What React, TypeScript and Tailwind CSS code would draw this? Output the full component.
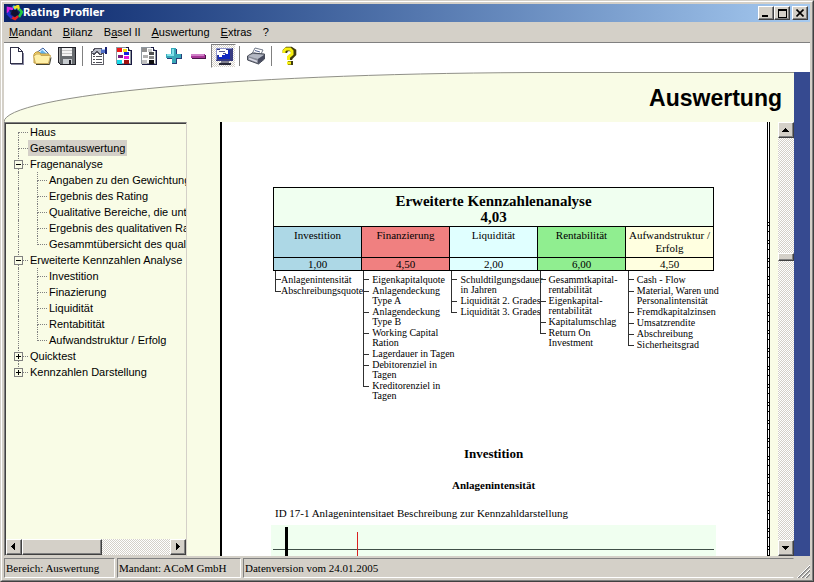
import React from "react";

const raised =
  "border border-t-white border-l-white border-r-[#404040] border-b-[#404040] bg-[#d4d0c8] shadow-[inset_-1px_-1px_#808080]";
const track =
  "bg-[repeating-conic-gradient(#d4d0c8_0_25%,#ffffff_0_50%)] bg-size-[2px_2px]";

function Logo() {
  return (
    <svg width="17" height="16" viewBox="0 0 17 16" fill="none" strokeWidth="2.6">
      <path d="M7 1 10 4" stroke="#30c8f0" />
      <path d="M2 8V3l5 1" stroke="#e020e0" />
      <path d="m8 3 4-2 1 4" stroke="#f0e020" />
      <path d="m13 4 3 3-3 5" stroke="#20c840" />
      <path d="m12 11-3 3-4-2" stroke="#e82020" />
      <path d="m6 13-4-4 2-2" stroke="#2030d0" />
      <path d="M6 5h5l2 4-4 3-4-3z" fill="#101030" />
    </svg>
  );
}

function NewIcon() {
  return (
    <svg width="18" height="20" viewBox="0 0 18 20" shapeRendering="crispEdges">
      <path d="M2.500 1.500h8l4 4v12h-12z" fill="#fff" stroke="#303048" />
      <path d="M10.500 1.500v4h4" fill="none" stroke="#303048" />
      <path d="M3 18.500h12.500V7" fill="none" stroke="#8888a0" />
    </svg>
  );
}

function OpenIcon() {
  return (
    <svg width="20" height="20" viewBox="0 0 20 20">
      <path d="m4 7 7-5 5 5 1 6H4z" fill="#d8f0ff" stroke="#4060a0" />
      <path d="m10 4 5 4H7z" fill="#60b0e8" />
      <path d="M2 17V8l2-2h3l2 2h8v9z" fill="#f8d870" stroke="#c09838" />
      <path d="m1.500 9.500 2 8h13l2-8H9L8 8H4l-1 1.500z" fill="#fff0a8" stroke="#c8a858" />
      <path d="M4 18.500h13.500l1.500-7" fill="none" stroke="#404030" />
    </svg>
  );
}

function SaveIcon() {
  return (
    <svg width="20" height="20" viewBox="0 0 20 20" shapeRendering="crispEdges">
      <path d="M1.500 1.500h17v17h-15l-2-2z" fill="#686c70" stroke="#202028" />
      <path d="M5 2h10v8H5z" fill="#f4f4f4" />
      <path d="M5 4h10v1H5zM5 7h10v1H5z" fill="#c8c8c8" />
      <path d="M6 13h9v5H6z" fill="#c8ccd0" />
      <path d="M12 14h2v4h-2z" fill="#202028" />
      <path d="M2 2h1v14H2z" fill="#a8a8a8" />
    </svg>
  );
}

function PropertiesIcon() {
  return (
    <svg width="20" height="20" viewBox="0 0 20 20" shapeRendering="crispEdges">
      <path d="M2.500 5.500h12v13h-12z" fill="#fff" stroke="#606068" />
      <path d="M4 10h2v1H4zm3 0h6v1H7zm-3 3h2v1H4zm3 0h6v1H7zm-3 3h2v1H4zm3 0h6v1H7z" fill="#505058" />
      <path d="M2.500 6.500 6 2.500h6l2 1v4l-3 1-3-3-3 3z" fill="#b8bcc8" stroke="#50505c" />
      <path d="M12 3h5v4h-5z" fill="#5070c8" />
      <path d="M13 3h3v1h-3z" fill="#b0c8f8" />
      <path d="M16 1h2v7h-2z" fill="#182070" />
    </svg>
  );
}

function ReportIcon({ colors }: { colors: string[] }) {
  return (
    <svg width="18" height="20" viewBox="0 0 18 20" shapeRendering="crispEdges">
      <path d="M1.500 1.500h11l3 3v13h-14z" fill="#fff" stroke="#9098a0" />
      <path d="M11 1.500h2v3h3v14H2" fill="none" stroke="#181840" />
      <path d="M2 2h5v4H2z" fill={colors[0]} />
      <path d="M9 6h5v3H9z" fill={colors[1]} />
      <path d="M8 3h4v3H8z" fill={colors[2]} />
      <path d="M3 9h5v3H3z" fill={colors[3]} />
      <path d="M9 10h5v3H9z" fill={colors[4]} />
      <path d="M2 14h5v4H2z" fill={colors[5]} />
      <path d="M9 14h5v4H9z" fill={colors[6]} />
    </svg>
  );
}

function PlusIcon() {
  return (
    <svg width="18" height="18" viewBox="0 0 18 18" shapeRendering="crispEdges">
      <path d="M7 2h5v5h5v5h-5v5H7v-5H2V7h5z" fill="#283c78" />
      <path d="M6 1h5v6h5v4h-5v5H7v-5H1V7h5z" fill="#38a8b8" />
      <path d="M7 2h2v7H2V7h5z" fill="#80e0e8" />
    </svg>
  );
}

function MinusIcon() {
  return (
    <svg width="18" height="18" viewBox="0 0 18 18" shapeRendering="crispEdges">
      <path d="M2 8h14v4H2z" fill="#481848" />
      <path d="M1 7h14v4H1z" fill="#a83898" />
      <path d="M1 7h13v2H1z" fill="#d080c8" />
    </svg>
  );
}

function MonitorIcon() {
  return (
    <svg width="20" height="20" viewBox="0 0 20 20" shapeRendering="crispEdges">
      <path d="M2 2h17v13H2z" fill="#383c80" />
      <path d="M2 2h16v1H3v11H2z" fill="#9098d0" />
      <path d="M4 4h12v9H4z" fill="#1028c0" />
      <path d="M3 4h3V3h6v1h2v4h-3v1H8v2H5V9H3z" fill="#fff" />
      <path d="M5 5h6v1H5zM9 7h3v1H9z" fill="#505890" />
      <path d="M7 15h8v2H7z" fill="#808090" />
      <path d="M5 17h12v2H5z" fill="#282838" />
    </svg>
  );
}

function PrinterIcon() {
  return (
    <svg width="20" height="20" viewBox="0 0 20 20">
      <path d="m6 8 3-6 8 2-3 6z" fill="#fff" stroke="#707888" />
      <path d="m9 4.500 5 1.500m-6 1 5 1" stroke="#506090" />
      <path d="m1.500 10 5-3 12 1v5l-6 5-11-4z" fill="#888c98" stroke="#484c58" />
      <path d="m2 10 5-2 11 1-6 4z" fill="#b4b8c4" />
      <path d="m12 13 6-4v4l-6 5z" fill="#484c60" />
      <path d="m3 12.500 8 3" stroke="#d8d8e4" strokeWidth="1.500" />
    </svg>
  );
}

function HelpIcon() {
  return (
    <svg width="18" height="20" viewBox="0 0 18 20" fill="none">
      <path d="M6 7V5l2-2h4l3 2v3l-4 4v2" stroke="#403c10" strokeWidth="4.600" />
      <path d="M9 15h5v4H9z" fill="#403c10" />
      <path d="M5 7V5l2-2h4l2 2v3l-3.500 3v3" stroke="#f8f010" strokeWidth="3" />
      <path d="M8 15.500h4v3H8z" fill="#f8f010" />
    </svg>
  );
}

type Tool = { label: string; icon: React.ReactNode; active?: boolean } | null;

const tools: Tool[] = [
  { label: "Neu", icon: <NewIcon /> },
  { label: "Öffnen", icon: <OpenIcon /> },
  { label: "Speichern", icon: <SaveIcon /> },
  null,
  { label: "Eigenschaften", icon: <PropertiesIcon /> },
  {
    label: "Farbiger Bericht",
    icon: <ReportIcon colors={["#f01818", "#1820e0", "#f8e018", "#781880", "#e818e0", "#18d8e8", "#a01010"]} />,
  },
  {
    label: "Grauer Bericht",
    icon: <ReportIcon colors={["#909090", "#505050", "#c8c8c8", "#b0b0b0", "#888888", "#c0c0c0", "#101010"]} />,
  },
  { label: "Hinzufügen", icon: <PlusIcon /> },
  { label: "Entfernen", icon: <MinusIcon /> },
  { label: "Auswertung", icon: <MonitorIcon />, active: true },
  null,
  { label: "Drucken", icon: <PrinterIcon /> },
  null,
  { label: "Hilfe", icon: <HelpIcon /> },
];

const menus = [
  ["", "M", "andant"],
  ["", "B", "ilanz"],
  ["B", "a", "sel II"],
  ["", "A", "uswertung"],
  ["", "E", "xtras"],
  ["?", "", ""],
];

type Node = { label: string; selected?: boolean; toggle?: "+" | "-"; children?: string[] };

const tree: Node[] = [
  { label: "Haus" },
  { label: "Gesamtauswertung", selected: true },
  {
    label: "Fragenanalyse",
    toggle: "-",
    children: [
      "Angaben zu den Gewichtung",
      "Ergebnis des Rating",
      "Qualitative Bereiche, die unte",
      "Ergebnis des qualitativen Rat",
      "Gesammtübersicht des qualit",
    ],
  },
  {
    label: "Erweiterte Kennzahlen Analyse",
    toggle: "-",
    children: ["Investition", "Finazierung", "Liquidität", "Rentabitität", "Aufwandstruktur / Erfolg"],
  },
  { label: "Quicktest", toggle: "+" },
  { label: "Kennzahlen Darstellung", toggle: "+" },
];

function Branch({ first, last }: { first?: boolean; last?: boolean }) {
  return (
    <span className="flex h-4 w-[10px] shrink-0 flex-col">
      <span className={`h-[9px] border-b border-dotted border-[#808080] ${first ? "" : "border-l"}`} />
      <span className={`flex-1 border-dotted border-[#808080] ${last ? "" : "border-l"}`} />
    </span>
  );
}

function Tree() {
  return (
    <ul className="flex-1 overflow-hidden text-[11px] leading-4 whitespace-nowrap">
      {tree.map((node, i) => (
        <li key={node.label}>
          <div className="relative flex h-4 pl-3">
            <Branch first={i === 0} last={i === tree.length - 1} />
            {node.toggle && (
              <button
                aria-label={node.label}
                className="absolute top-1 left-2 flex size-[9px] items-center justify-center border border-[#808080] bg-[#f9fce6]"
              >
                <svg width="5" height="5" viewBox="0 0 5 5" shapeRendering="crispEdges">
                  <path d={node.toggle === "+" ? "M0 2h5v1H0zM2 0h1v5H2z" : "M0 2h5v1H0z"} />
                </svg>
              </button>
            )}
            <button className={node.selected ? "bg-[#d4d0c8] px-[2px]" : "pl-[2px]"}>{node.label}</button>
          </div>
          {node.children && (
            <ul>
              {node.children.map((child, j) => (
                <li key={child} className="flex h-4 pl-3">
                  <span className="w-[19px] shrink-0 border-l border-dotted border-[#808080]" />
                  <Branch last={j === node.children!.length - 1} />
                  <button className="pl-[2px]">{child}</button>
                </li>
              ))}
            </ul>
          )}
        </li>
      ))}
    </ul>
  );
}

function Arrow({ d }: { d: string }) {
  return (
    <svg width="8" height="8" viewBox="0 0 8 8" shapeRendering="crispEdges">
      <path d={d} />
    </svg>
  );
}

const groups = [
  {
    name: "Investition",
    value: "1,00",
    color: "bg-[#add8e6]",
    items: [["Anlagenintensität"], ["Abschreibungsquote"]],
  },
  {
    name: "Finanzierung",
    value: "4,50",
    color: "bg-[#f08080]",
    items: [
      ["Eigenkapitalquote"],
      ["Anlagendeckung", "Type A"],
      ["Anlagendeckung", "Type B"],
      ["Working Capital", "Ration"],
      ["Lagerdauer in Tagen"],
      ["Debitorenziel in", "Tagen"],
      ["Kreditorenziel in", "Tagen"],
    ],
  },
  {
    name: "Liquidität",
    value: "2,00",
    color: "bg-[#e0ffff]",
    items: [["Schuldtilgungsdauer", "in Jahren"], ["Liquidität 2. Grades"], ["Liquidität 3. Grades"]],
  },
  {
    name: "Rentabilität",
    value: "6,00",
    color: "bg-[#90ee90]",
    items: [
      ["Gesammtkapital-", "rentabilität"],
      ["Eigenkapital-", "rentabilität"],
      ["Kapitalumschlag"],
      ["Return On", "Investment"],
    ],
  },
  {
    name: "Aufwandstruktur / Erfolg",
    value: "4,50",
    color: "bg-[#ffffe0]",
    items: [
      ["Cash - Flow"],
      ["Material, Waren und", "Personalintensität"],
      ["Fremdkapitalzinsen"],
      ["Umsatzrendite"],
      ["Abschreibung"],
      ["Sicherheitsgrad"],
    ],
  },
];

function Report() {
  return (
    <div className="mx-auto w-[441px] pt-[65px] font-['Liberation_Serif','Times_New_Roman',serif]">
      <table className="w-full table-fixed border-collapse text-center text-[11px] leading-[13px]">
        <thead>
          <tr>
            <th colSpan={5} className="h-[39px] border border-black bg-[#f0fff0] px-0 pt-1 pb-0 text-[15px] leading-4 font-bold">
              Erweiterte Kennzahlenanalyse
              <br />
              4,03
            </th>
          </tr>
          <tr>
            {groups.map((g) => (
              <th key={g.name} className={`h-[31px] border border-black px-0 pt-[2px] align-top font-normal ${g.color}`}>
                {g.name}
              </th>
            ))}
          </tr>
        </thead>
        <tbody>
          <tr>
            {groups.map((g) => (
              <td key={g.name} className={`h-[13px] border border-black leading-3 ${g.color}`}>
                {g.value}
              </td>
            ))}
          </tr>
        </tbody>
      </table>
      <div className="grid h-[168px] grid-cols-5 text-[10px] leading-[10px] whitespace-nowrap">
        {groups.map((g, i) => (
          <ul key={g.name} className="pl-[2px]">
            {g.items.map((lines, j) => (
              <li key={j} className="flex">
                <span className="flex w-[6px] shrink-0 flex-col">
                  <span className={`border-b border-l border-[#303030] ${j === 0 ? "h-[9px]" : "h-[6px]"}`} />
                  <span className={`flex-1 border-[#303030] ${j === g.items.length - 1 ? "" : "border-l"}`} />
                </span>
                <span className={`pb-px ${i === 0 ? "" : "pl-[3px]"} ${j === 0 ? "pt-1" : ""}`}>
                  {lines.map((line) => (
                    <span key={line} className="block">
                      {line}
                    </span>
                  ))}
                </span>
              </li>
            ))}
          </ul>
        ))}
      </div>
      <h2 className="pt-[7px] text-center text-[13px] leading-4 font-bold">Investition</h2>
      <h3 className="pt-[15px] text-center text-[11px] leading-4 font-bold">Anlagenintensität</h3>
      <p className="pt-3 pl-[2px] text-[11px] leading-4">ID 17-1 Anlagenintensitaet Beschreibung zur Kennzahldarstellung</p>
      <svg className="-mx-[2px] mt-1 w-[445px] bg-[#f0fff0]" height="60" viewBox="0 0 445 60" shapeRendering="crispEdges">
        <path d="M2 24h441v1H2z" fill="#405048" />
        <path d="M14 2h3v58h-3z" />
        <path d="M86 7h1v53h-1z" fill="#d82020" />
      </svg>
    </div>
  );
}

export default function App() {
  return (
    <div className="h-screen border border-t-[#d4d0c8] border-r-[#404040] border-b-[#404040] border-l-[#d4d0c8] bg-[#d4d0c8] font-['Liberation_Sans',Arial,sans-serif] text-black">
      <div className="flex h-full flex-col border border-t-white border-r-[#808080] border-b-[#808080] border-l-white p-[2px]">
        <header className="flex h-[18px] shrink-0 items-center bg-linear-to-r from-[#0a246a] to-[#a6caf0] px-[2px]">
          <Logo />
          <h1 className="flex-1 font-['DejaVu_Sans_Condensed','DejaVu_Sans',sans-serif] text-[11px] font-bold text-white">
            Rating Profiler
          </h1>
          <button aria-label="Minimieren" className={`flex h-[14px] w-4 items-center justify-center ${raised}`}>
            <Arrow d="M0 6h6v2H0z" />
          </button>
          <button aria-label="Maximieren" className={`flex h-[14px] w-4 items-center justify-center ${raised}`}>
            <svg width="9" height="9" viewBox="0 0 9 9" shapeRendering="crispEdges">
              <path d="M0 0h9v9H0zM1 2v6h7V2z" fillRule="evenodd" />
            </svg>
          </button>
          <button aria-label="Schließen" className={`ml-[2px] flex h-[14px] w-4 items-center justify-center ${raised}`}>
            <svg width="8" height="8" viewBox="0 0 8 8" stroke="#000" strokeWidth="1.600">
              <path d="m0.500 0.500 7 7m0-7-7 7" />
            </svg>
          </button>
        </header>

        <nav className="flex h-[21px] shrink-0 items-center gap-[11px] border-b border-[#808080] pl-[5px] text-[11px]">
          {menus.map(([before, key, after]) => (
            <button key={before + key + after}>
              {before}
              <span className="underline underline-offset-1">{key}</span>
              {after}
            </button>
          ))}
        </nav>

        <div className="flex h-[29px] shrink-0 items-start bg-white">
          {tools.map((tool, i) =>
            tool ? (
              <button
                key={i}
                aria-label={tool.label}
                className={`mt-px flex h-6 w-[25px] items-center justify-center ${
                  tool.active ? `border border-t-[#808080] border-r-white border-b-white border-l-[#808080] ${track}` : ""
                }`}
              >
                {tool.icon}
              </button>
            ) : (
              <span key={i} className="mt-[3px] flex w-[7px] justify-center">
                <span className="h-5 w-px bg-[#808080]" />
              </span>
            ),
          )}
        </div>

        <div className="flex min-h-0 flex-1">
          <div className="flex min-w-0 flex-1 flex-col bg-[#f9fce6]">
            <div className="relative h-[50px] shrink-0">
              <svg className="absolute inset-0 h-full w-full" viewBox="0 0 790 50" preserveAspectRatio="none">
                <path d="M0 50A550 49.500 0 0 1 550 0.500H790V0H0z" fill="#fff" />
                <path d="M0 50A550 49.500 0 0 1 550 0.500H790" fill="none" stroke="#909088" />
              </svg>
              <h2 className="relative pt-3 pr-3 text-right text-[23px] leading-7 font-bold">Auswertung</h2>
            </div>

            <div className="flex min-h-0 flex-1">
              <aside className="flex w-[183px] shrink-0 flex-col border border-t-[#808080] border-r-[#d4d0c8] border-b-[#d4d0c8] border-l-[#808080]">
                <div className="flex min-h-0 flex-1 flex-col border-t border-l border-[#404040]">
                  <Tree />
                  <div className={`flex h-4 shrink-0 ${track}`}>
                    <button aria-label="Nach links" className={`flex w-4 items-center justify-center ${raised}`}>
                      <Arrow d="M5 0v7H4V6H3V5H2V4H1V3h1V2h1V1h1V0z" />
                    </button>
                    <span className={`w-20 ${raised}`} />
                    <button aria-label="Nach rechts" className={`ml-auto flex w-4 items-center justify-center ${raised}`}>
                      <Arrow d="M2 0h1v1h1v1h1v1h1v1H5v1H4v1H3v1H2z" />
                    </button>
                  </div>
                </div>
              </aside>

              <main className="ml-[33px] min-w-0 flex-1 overflow-hidden border-l-2 border-black bg-white pr-[2px]">
                <Report />
              </main>
              <div className="w-[3px] border-x border-black bg-white pt-[100px]">
                <div className="h-full bg-[repeating-linear-gradient(#000000_0_1px,#ffffff_1px_3px,#000000_3px_4px,#ffffff_4px_9px,#000000_9px_10px,#ffffff_10px_18px)]" />
              </div>
              <div className={`ml-2 flex w-4 flex-col ${track}`}>
                <button aria-label="Nach oben" className={`flex h-4 items-center justify-center ${raised}`}>
                  <Arrow d="M0 6h7V5H6V4H5V3H4V2H3v1H2v1H1v1H0z" />
                </button>
                <span className={`mt-[115px] h-2 ${raised}`} />
                <button aria-label="Nach unten" className={`mt-auto flex h-4 items-center justify-center ${raised}`}>
                  <Arrow d="M0 2h7v1H6v1H5v1H4v1H3V5H2V4H1V3H0z" />
                </button>
              </div>
            </div>
          </div>
          <div className="w-4 shrink-0 bg-[#364a90]" />
        </div>

        <footer className="flex h-[22px] shrink-0 gap-[2px] pt-[2px] font-['Liberation_Serif','Times_New_Roman',serif] text-[11px] leading-[18px]">
          <span className="w-[111px] border border-t-[#808080] border-r-white border-b-white border-l-[#808080] pl-px">
            Bereich: Auswertung
          </span>
          <span className="w-[124px] border border-t-[#808080] border-r-white border-b-white border-l-[#808080] pl-px">
            Mandant: ACoM GmbH
          </span>
          <span className="flex-1 border border-t-[#808080] border-r-transparent border-b-white border-l-[#808080] pl-px">
            Datenversion vom 24.01.2005
          </span>
          <svg className="mt-auto" width="14" height="14" viewBox="0 0 14 14">
            <path d="M2 14 14 2M6 14l8-8M10 14l4-4" stroke="#808080" strokeWidth="1.500" />
            <path d="M1 14 14 1M5 14l9-9M9 14l5-5" stroke="#fff" />
          </svg>
        </footer>
      </div>
    </div>
  );
}
